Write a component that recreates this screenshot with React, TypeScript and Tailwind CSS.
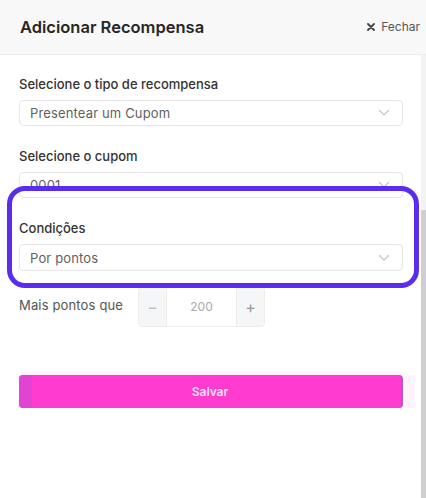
import React from "react";

function Chevron() {
  return (
    <svg width="12" height="8" viewBox="0 0 12 8" fill="none" className="shrink-0">
      <path d="M1.5 1.5L6 6L10.5 1.5" stroke="#c4c4c4" strokeWidth="1.1" strokeLinecap="round" strokeLinejoin="round" />
    </svg>
  );
}

function Select({ value, className = "" }: { value: string; className?: string }) {
  return (
    <div className={`flex h-[26px] items-center justify-between rounded-[4px] border border-[#e6e6e6] bg-white pl-[10px] pr-[12px] ${className}`}>
      <span className="text-[13px] leading-[20px] tracking-[0.15px] text-[#5f5f5f]">{value}</span>
      <Chevron />
    </div>
  );
}

export default function App() {
  return (
    <div
      className="relative h-[498px] w-[426px] overflow-hidden bg-white"
      style={{ fontFamily: "Inter, 'Noto Sans', sans-serif" }}
    >
      <div className="flex h-[55px] items-center justify-between border-b border-[#ececec] bg-[#f8f8f8] pl-[20px] pr-[6px]">
        <span className="text-[16.5px] font-semibold text-[#262626]">Adicionar Recompensa</span>
        <span className="flex items-center gap-[6px] text-[12px] text-[#555]">
          <svg width="8" height="8" viewBox="0 0 8 8">
            <path d="M1 1L7 7M7 1L1 7" stroke="#444" strokeWidth="1.8" strokeLinecap="round" />
          </svg>
          Fechar
        </span>
      </div>
      <div className="flex h-[443px]">
        <div className="flex-1 px-[19px] pr-[18px]">
          <div className="mt-[19px] text-[13px] font-medium leading-[20px] text-[#333]">Selecione o tipo de recompensa</div>
          <Select value="Presentear um Cupom" className="mt-[6px]" />
          <div className="mt-[20px] text-[13px] font-medium leading-[20px] text-[#333]">Selecione o cupom</div>
          <Select value="0001" className="mt-[6px]" />
          <div className="mt-[20px] text-[13px] font-medium leading-[20px] text-[#333]">Condições</div>
          <Select value="Por pontos" className="mt-[6px] h-[27px]" />
          <div className="mt-[16px] flex items-start">
            <div className="mt-[8px] w-[119px] text-[13px] leading-[20px] tracking-[0.15px] text-[#555]">Mais pontos que</div>
            <div className="flex h-[40px] w-[127px] overflow-hidden rounded-[4px] border border-[#ececec]">
              <div className="flex w-[27px] items-center justify-center bg-[#f5f6f8] text-[16px] text-[#bbb]">−</div>
              <div className="flex flex-1 items-center justify-center border-x border-[#ececec] text-[12px] text-[#aaa]">200</div>
              <div className="flex w-[27px] items-center justify-center bg-[#f5f6f8] text-[16px] text-[#999]">+</div>
            </div>
          </div>
          <div className="mt-[48px] rounded-[2px] shadow-[0_-7px_0_-3px_#fff2fc,12px_0_0_0_#fff4fc]">
            <div className="flex h-[33px] items-center overflow-hidden rounded-[4px] border-r-2 border-[#9a5fd6] bg-[#ff3bd0]">
              <div className="h-full w-[13px] bg-[#df44d2]" />
              <div className="flex flex-1 items-center justify-center">
                <span className="text-[12px] font-semibold text-[#ffe0f7]">Salvar</span>
              </div>
              <div className="w-[13px]" />
            </div>
          </div>
        </div>
        <div className="flex w-[5px] flex-col">
          <div className="h-[155px] bg-[#f3f3f3]" />
          <div className="flex-1 bg-[#cfcfcf]" />
        </div>
      </div>
      <div className="pointer-events-none absolute left-[7px] top-[186px] h-[102px] w-[412px] rounded-[18px] border-[5px] border-[#5a2ded]" />
    </div>
  );
}
